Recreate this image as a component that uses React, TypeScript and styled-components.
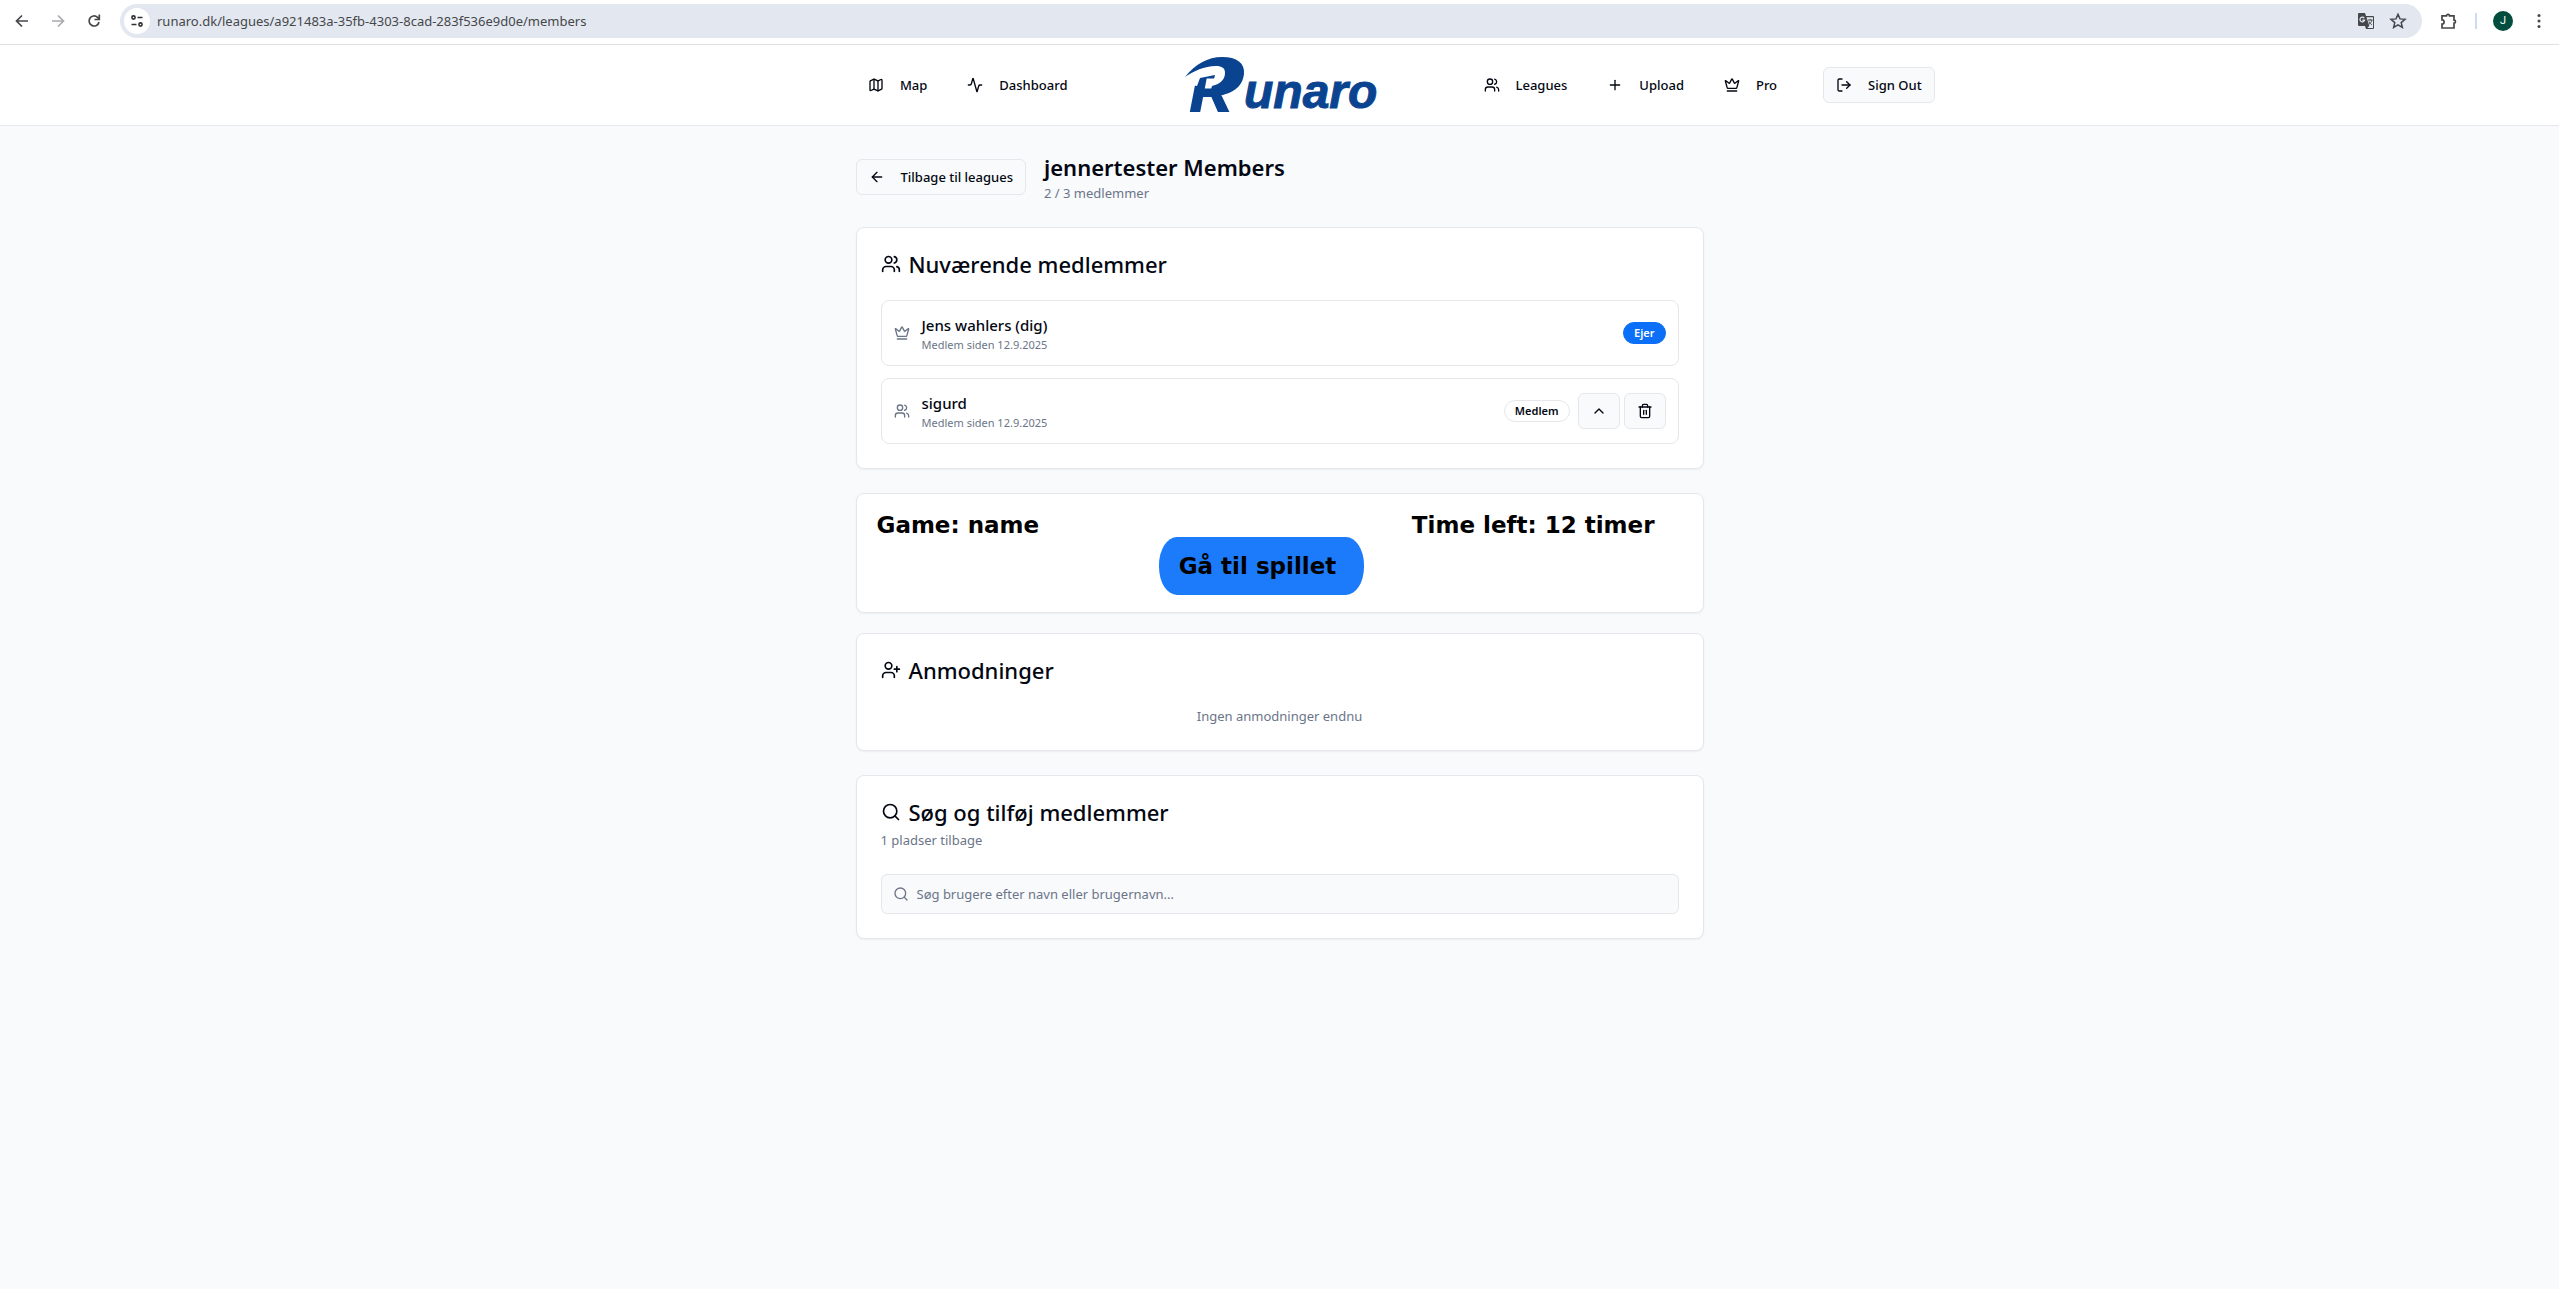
import React from "react";
import styled, { createGlobalStyle, css } from "styled-components";
import {
  Activity,
  ArrowLeft,
  ChevronUp,
  Crown,
  LogOut,
  Map as MapIcon,
  Plus,
  Search,
  Trash2,
  UserPlus,
  Users,
} from "lucide-react";

const color = {
  ink: "#030712",
  muted: "#6b7588",
  line: "#e5e7eb",
  page: "#f9fafc",
  white: "#ffffff",
  primary: "#0b6ff8",
  play: "#1c7bfb",
  logo: "#0a438f",
  chrome: "#45474a",
};

const GlobalStyle = createGlobalStyle`
  *, *::before, *::after { box-sizing: border-box; }
  body {
    margin: 0;
    background: ${color.page};
    color: ${color.ink};
    font-family: "Noto Sans", "Open Sans", sans-serif;
    font-size: 13px;
    line-height: 20px;
  }
  h1, h2, p, ul { margin: 0; padding: 0; }
  button, input { font: inherit; color: inherit; }
  a { color: inherit; text-decoration: none; }
  svg { display: block; flex: none; }
`;

/* Browser toolbar */

const Toolbar = styled.div`
  display: flex;
  align-items: center;
  height: 45px;
  padding: 0 10px 2px 12px;
  background: ${color.white};
  border-bottom: 1px solid #dfe1e5;
  color: ${color.chrome};
`;

const ToolbarButton = styled.button<{ $faded?: boolean }>`
  display: flex;
  align-items: center;
  justify-content: center;
  width: 20px;
  height: 20px;
  padding: 0;
  border: 0;
  background: none;
  color: ${(p) => (p.$faded ? "#a9abae" : color.chrome)};
`;

const ToolbarNav = styled.div`
  display: flex;
  gap: 16px;
  margin-right: 16px;
`;

const AddressBar = styled.div`
  display: flex;
  flex: 1;
  align-items: center;
  height: 34px;
  padding: 0 14px 0 4px;
  border-radius: 17px;
  background: #e3e7f0;
`;

const SiteInfo = styled.button`
  display: flex;
  align-items: center;
  justify-content: center;
  width: 26px;
  height: 26px;
  padding: 0;
  border: 0;
  border-radius: 50%;
  background: ${color.white};
`;

const AddressInput = styled.input`
  flex: 1;
  padding: 0 7px;
  border: 0;
  background: none;
  outline: none;
`;

const ToolbarActions = styled.div`
  display: flex;
  align-items: center;
  gap: 12px;
`;

const ToolbarEnd = styled(ToolbarActions)`
  gap: 16px;
  padding-left: 17px;
`;

const Separator = styled.span`
  width: 2px;
  height: 16px;
  background: #cddaf3;
`;

const Avatar = styled.button`
  width: 20px;
  height: 20px;
  padding: 0;
  border: 0;
  border-radius: 50%;
  background: #034d3e;
  color: ${color.white};
  font-family: Roboto, sans-serif;
  font-size: 11px;
  line-height: 20px;
  text-align: center;
`;

/* Site header */

const SiteHeader = styled.header`
  display: grid;
  grid-template-columns: 1fr 192px 1fr;
  align-items: center;
  height: 81px;
  background: ${color.white};
  border-bottom: 1px solid ${color.line};
`;

const NavGroup = styled.nav<{ $side: "left" | "right" }>`
  display: flex;
  align-items: center;
  gap: 16px;
  justify-content: ${(p) => (p.$side === "left" ? "flex-end" : "flex-start")};
  padding: ${(p) => (p.$side === "left" ? "0 104px 0 0" : "0 0 0 96px")};
`;

const controlStyle = css`
  display: inline-flex;
  align-items: center;
  gap: 16px;
  height: 36px;
  padding: 0 12px;
  border-radius: 6px;
  font-size: 13px;
  font-weight: 500;
  white-space: nowrap;
`;

const NavLink = styled.a`
  ${controlStyle}
`;

const OutlineButton = styled.button<{ $spaced?: boolean }>`
  ${controlStyle}
  margin-left: ${(p) => (p.$spaced ? "18px" : "0")};
  border: 1px solid ${color.line};
  background: ${color.page};
`;

/* Page */

const Page = styled.main`
  display: flex;
  flex-direction: column;
  gap: 24px;
  max-width: 896px;
  margin: 0 auto;
  padding: 25px 24px 24px;
`;

const PageHead = styled.div`
  display: flex;
  align-items: center;
  gap: 18px;
`;

const PageTitle = styled.h1`
  font-size: 22px;
  font-weight: 600;
  line-height: 32px;
`;

const Muted = styled.p<{ $center?: boolean }>`
  color: ${color.muted};
  font-size: 13px;
  line-height: 20px;
  text-align: ${(p) => (p.$center ? "center" : "left")};
`;

const Card = styled.section`
  padding: 24px;
  border: 1px solid ${color.line};
  border-radius: 8px;
  background: ${color.white};
  box-shadow: 0 1px 2px rgba(0, 0, 0, 0.05);
`;

const CardHead = styled.div`
  display: flex;
  flex-direction: column;
  gap: 6px;
  margin-bottom: 24px;
`;

const CardTitle = styled.h2`
  display: flex;
  align-items: center;
  gap: 8px;
  font-size: 22px;
  font-weight: 500;
  line-height: 24px;
`;

const MemberList = styled.ul`
  display: flex;
  flex-direction: column;
  gap: 12px;
  list-style: none;
`;

const MemberRow = styled.li`
  display: flex;
  align-items: center;
  gap: 12px;
  padding: 12px;
  border: 1px solid ${color.line};
  border-radius: 8px;

  > svg { color: ${color.muted}; }
`;

const MemberText = styled.div`
  flex: 1;
`;

const MemberName = styled.p`
  font-size: 15px;
  font-weight: 500;
  line-height: 24px;
`;

const MemberSince = styled.p`
  color: ${color.muted};
  font-size: 11px;
  line-height: 16px;
`;

const MemberStatus = styled.div`
  display: flex;
  align-items: center;
  gap: 8px;
`;

const MemberActions = styled.div`
  display: flex;
  align-items: center;
  gap: 4px;
`;

const Badge = styled.span<{ $solid?: boolean }>`
  padding: 2px 10px;
  border: 1px solid ${(p) => (p.$solid ? color.primary : color.line)};
  border-radius: 11px;
  background: ${(p) => (p.$solid ? color.primary : color.white)};
  color: ${(p) => (p.$solid ? color.white : color.ink)};
  font-size: 11px;
  font-weight: 600;
  line-height: 16px;
`;

const IconButton = styled(OutlineButton)`
  justify-content: center;
  width: 42px;
`;

/* Game card */

const GameCard = styled(Card)`
  margin-bottom: -4px;
  padding: 19px 48px 17px 20px;
  color: #000;
  font-family: "DejaVu Sans", sans-serif;
  font-size: 23px;
  font-weight: 700;
  line-height: 24px;
`;

const GameInfo = styled.div`
  display: flex;
  justify-content: space-between;
`;

const GameAction = styled.div`
  display: flex;
  justify-content: center;
  padding-right: 8px;
`;

const PlayButton = styled.button`
  height: 58px;
  padding: 0 28px 0 20px;
  border: 0;
  border-radius: 18px / 28px;
  background: ${color.play};
`;

/* Search */

const SearchBox = styled.label`
  display: flex;
  align-items: center;
  gap: 8px;
  height: 40px;
  padding: 0 11px;
  border: 1px solid ${color.line};
  border-radius: 6px;
  background: ${color.page};
  color: ${color.muted};
`;

const SearchInput = styled.input`
  flex: 1;
  padding: 0;
  border: 0;
  background: none;
  outline: none;

  &::placeholder { color: ${color.muted}; opacity: 1; }
`;

function Logo() {
  return (
    <svg width="200" height="80" viewBox="0 -7 200 80" role="img" aria-label="Runaro">
      <g
        fill={color.logo}
        stroke={color.logo}
        strokeWidth="2"
        fontFamily="Liberation Sans, sans-serif"
        fontStyle="italic"
        fontWeight="700"
      >
        <text x="10" y="59" fontSize="58">R</text>
        <text x="64" y="56" fontSize="48" strokeWidth="1">unaro</text>
      </g>
      <path fill="#fff" d="M5 26C13 18 24 13 36 13c9 0 11 4 10 9-1 6-6 10-14 13l3-12-15 3-3 8L5 32Z" />
      <path
        fill={color.logo}
        d="M5 25C15 12 28 5 42 5c15 0 23 6 22 17-1 10-8 17-18 20l-17 2 3-10c9-2 13-7 13-13 0-5-3-7-9-7-12 0-22 5-31 11Z"
      />
    </svg>
  );
}

const LogoLink = styled.a`
  display: flex;
  justify-content: center;
`;

const SiteInfoIcon = () => (
  <svg width="16" height="16" viewBox="0 0 16 16" fill="none" stroke="#303134" strokeWidth="1.600">
    <circle cx="4.500" cy="4.500" r="1.600" />
    <path d="M8.500 4.500h5M2.500 11.500h5" />
    <circle cx="11.500" cy="11.500" r="1.600" />
  </svg>
);

const BackIcon = () => (
  <svg width="16" height="16" viewBox="0 0 16 16" fill="none" stroke="currentColor" strokeWidth="1.700">
    <path d="M14 8H3M8 2.500 2.500 8 8 13.500" />
  </svg>
);

const ForwardIcon = () => (
  <svg width="16" height="16" viewBox="0 0 16 16" fill="none" stroke="currentColor" strokeWidth="1.700">
    <path d="M2 8h11M8 2.500 13.500 8 8 13.500" />
  </svg>
);

const ReloadIcon = () => (
  <svg width="16" height="16" viewBox="0 0 16 16" fill="none" stroke="currentColor" strokeWidth="1.700">
    <path d="M13 9a5 5 0 1 1-1.500-4.700L13 6M13.300 1.500v5H8.500" />
  </svg>
);

const TranslateIcon = () => (
  <svg width="18" height="18" viewBox="0 0 18 18">
    <path fill="#45474a" d="M2 1h6l1 3h7a1 1 0 0 1 1 1v11a1 1 0 0 1-1 1H9l-1-3H2a1 1 0 0 1-1-1V2a1 1 0 0 1 1-1Z" />
    <path fill="#e3e7f0" d="M9.500 5.200H16V16h-5.500l1.800-2.200Z" />
    <path fill="none" stroke="#e3e7f0" strokeWidth="1.200" d="M7.200 6.200a2.300 2.300 0 1 0 .3 2H5.300" />
    <path fill="none" stroke="#45474a" d="M11 8h4.500M13.200 7v1M15 8c-.5 2-2 3.500-3 4.200M12 9.500c.5 1.500 2 2.700 3 3.300" />
  </svg>
);

const StarIcon = () => (
  <svg width="18" height="18" viewBox="0 0 18 18" fill="none" stroke="currentColor" strokeWidth="1.500">
    <path d="m9 2.300 2 4.600 5 .4-3.800 3.300 1.200 4.900L9 12.900l-4.400 2.600 1.200-4.900L2 7.300l5-.4Z" />
  </svg>
);

const ExtensionIcon = () => (
  <svg width="18" height="18" viewBox="0 0 18 18" fill="none" stroke="currentColor" strokeWidth="1.700">
    <path d="M2 3.800h4.500a1.500 1.500 0 0 1 3 0H14v4.400a1.500 1.500 0 0 1 0 3V16H2v-4a2 2 0 0 0 0-4.200Z" />
  </svg>
);

const MenuIcon = () => (
  <svg width="16" height="16" viewBox="0 0 16 16" fill="currentColor">
    <circle cx="8" cy="2.500" r="1.500" />
    <circle cx="8" cy="8" r="1.500" />
    <circle cx="8" cy="13.500" r="1.500" />
  </svg>
);

function BrowserToolbar() {
  return (
    <Toolbar>
      <ToolbarNav>
        <ToolbarButton aria-label="Back"><BackIcon /></ToolbarButton>
        <ToolbarButton aria-label="Forward" $faded><ForwardIcon /></ToolbarButton>
        <ToolbarButton aria-label="Reload"><ReloadIcon /></ToolbarButton>
      </ToolbarNav>
      <AddressBar>
        <SiteInfo aria-label="Site information"><SiteInfoIcon /></SiteInfo>
        <AddressInput
          aria-label="Address"
          defaultValue="runaro.dk/leagues/a921483a-35fb-4303-8cad-283f536e9d0e/members"
        />
        <ToolbarActions>
          <ToolbarButton aria-label="Translate"><TranslateIcon /></ToolbarButton>
          <ToolbarButton aria-label="Bookmark"><StarIcon /></ToolbarButton>
        </ToolbarActions>
      </AddressBar>
      <ToolbarEnd>
        <ToolbarButton aria-label="Extensions"><ExtensionIcon /></ToolbarButton>
        <Separator />
        <Avatar aria-label="Profile">J</Avatar>
        <ToolbarButton aria-label="Menu"><MenuIcon /></ToolbarButton>
      </ToolbarEnd>
    </Toolbar>
  );
}

export default function App() {
  return (
    <>
      <GlobalStyle />
      <BrowserToolbar />
      <SiteHeader>
        <NavGroup $side="left">
          <NavLink href="#map"><MapIcon size={16} />Map</NavLink>
          <NavLink href="#dashboard"><Activity size={16} />Dashboard</NavLink>
        </NavGroup>
        <LogoLink href="#home"><Logo /></LogoLink>
        <NavGroup $side="right">
          <NavLink href="#leagues"><Users size={16} />Leagues</NavLink>
          <NavLink href="#upload"><Plus size={16} />Upload</NavLink>
          <NavLink href="#pro"><Crown size={16} />Pro</NavLink>
          <OutlineButton $spaced><LogOut size={16} />Sign Out</OutlineButton>
        </NavGroup>
      </SiteHeader>

      <Page>
        <PageHead>
          <OutlineButton><ArrowLeft size={16} />Tilbage til leagues</OutlineButton>
          <div>
            <PageTitle>jennertester Members</PageTitle>
            <Muted>2 / 3 medlemmer</Muted>
          </div>
        </PageHead>

        <Card>
          <CardHead>
            <CardTitle><Users size={20} />Nuværende medlemmer</CardTitle>
          </CardHead>
          <MemberList>
            <MemberRow>
              <Crown size={16} />
              <MemberText>
                <MemberName>Jens wahlers (dig)</MemberName>
                <MemberSince>Medlem siden 12.9.2025</MemberSince>
              </MemberText>
              <MemberStatus>
                <Badge $solid>Ejer</Badge>
              </MemberStatus>
            </MemberRow>
            <MemberRow>
              <Users size={16} />
              <MemberText>
                <MemberName>sigurd</MemberName>
                <MemberSince>Medlem siden 12.9.2025</MemberSince>
              </MemberText>
              <MemberStatus>
                <Badge>Medlem</Badge>
                <MemberActions>
                  <IconButton aria-label="Forfrem"><ChevronUp size={16} /></IconButton>
                  <IconButton aria-label="Fjern"><Trash2 size={16} /></IconButton>
                </MemberActions>
              </MemberStatus>
            </MemberRow>
          </MemberList>
        </Card>

        <GameCard>
          <GameInfo>
            <p>Game: name</p>
            <p>Time left: 12 timer</p>
          </GameInfo>
          <GameAction>
            <PlayButton>Gå til spillet</PlayButton>
          </GameAction>
        </GameCard>

        <Card>
          <CardHead>
            <CardTitle><UserPlus size={20} />Anmodninger</CardTitle>
          </CardHead>
          <Muted $center>Ingen anmodninger endnu</Muted>
        </Card>

        <Card>
          <CardHead>
            <CardTitle><Search size={20} />Søg og tilføj medlemmer</CardTitle>
            <Muted>1 pladser tilbage</Muted>
          </CardHead>
          <SearchBox>
            <Search size={16} />
            <SearchInput
              aria-label="Søg brugere"
              placeholder="Søg brugere efter navn eller brugernavn..."
            />
          </SearchBox>
        </Card>
      </Page>
    </>
  );
}
